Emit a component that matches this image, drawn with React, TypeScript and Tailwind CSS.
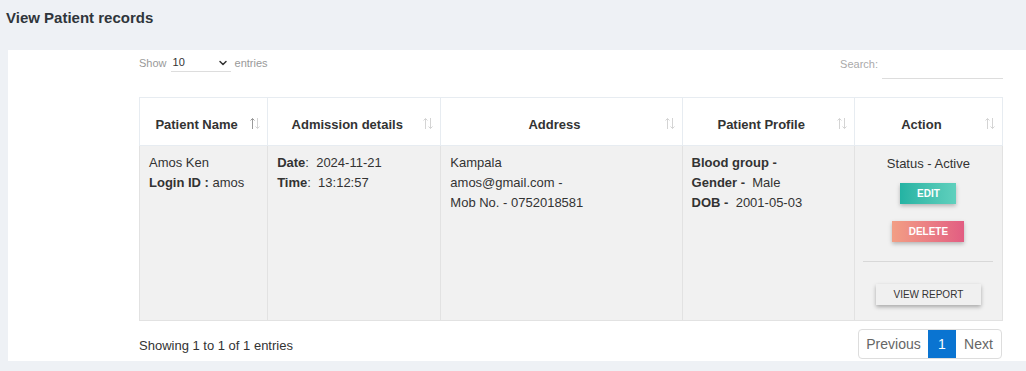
import { ChevronDown } from "lucide-react";

const SortIcon = ({ active = false }: { active?: boolean }) => (
  <svg
    width="12"
    height="13"
    viewBox="0 0 12 13"
    fill="none"
    strokeWidth="1"
    className="absolute right-[6px] top-[19px]"
  >
    <g stroke={active ? "#9a9a9a" : "#d4d4d4"}>
      <path d="M3.5 1.5V12" />
      <path d="M1.5 3.5L3.5 1.5L5.5 3.5" />
    </g>
    <g stroke="#d4d4d4">
      <path d="M8.5 1V11.5" />
      <path d="M6.5 9.5L8.5 11.5L10.5 9.5" />
    </g>
  </svg>
);

const headers = [
  { label: "Patient Name", width: "w-[128px]", active: true },
  { label: "Admission details", width: "w-[173px]" },
  { label: "Address", width: "w-[241px]" },
  { label: "Patient Profile", width: "w-[172px]" },
  { label: "Action", width: "w-[148px]" },
];

const App = () => {
  return (
    <div className="h-[371px] w-[1026px] overflow-hidden bg-[#eef1f5] font-['Liberation_Sans',Arial,sans-serif] text-[#333]">
      {/* Page title */}
      <h1 className="h-[50px] pl-[6px] pt-[7px] text-[15px] font-bold text-[#2f353b]">
        View Patient records
      </h1>

      {/* Panel */}
      <div className="ml-[8px] h-[311px] bg-white pl-[131px] pr-[23px]">
        {/* Top controls */}
        <div className="flex h-[47px] items-start justify-between pt-[4px]">
          <div className="flex items-center gap-[4px] text-[11px] text-[#999]">
            <span>Show</span>
            <div className="flex h-[18px] w-[60px] items-center justify-between border-b border-[#ddd] px-[2px] text-[#333]">
              <span>10</span>
              <ChevronDown size={12} strokeWidth={3} className="text-[#333]" />
            </div>
            <span>entries</span>
          </div>
          <div className="flex items-start gap-[4px] text-[11px] text-[#aaa]">
            <span className="pt-[2px]">Search:</span>
            <div className="h-[25px] w-[121px] border-b border-[#ddd]" />
          </div>
        </div>

        {/* Table */}
        <table className="w-[864px] table-fixed border-collapse border border-[#e7ecf1] text-[13px]">
          <thead>
            <tr className="h-[48px] bg-white">
              {headers.map((h) => (
                <th
                  key={h.label}
                  className={`relative ${h.width} border border-[#e7ecf1] pb-[11px] pl-[8px] pr-[22px] text-center align-bottom font-bold text-[#333]`}
                >
                  {h.label}
                  <SortIcon active={h.active} />
                </th>
              ))}
            </tr>
          </thead>
          <tbody>
            <tr className="h-[175px] bg-[#f1f1f1] align-top leading-[20px]">
              <td className="border border-[#e2e2e2] px-[9px] pt-[7px]">
                <div>Amos Ken</div>
                <div>
                  <span className="font-bold">Login ID :</span> amos
                </div>
              </td>
              <td className="border border-[#e2e2e2] px-[9px] pt-[7px]">
                <div>
                  <span className="font-bold">Date</span>:&nbsp; 2024-11-21
                </div>
                <div>
                  <span className="font-bold">Time</span>:&nbsp; 13:12:57
                </div>
              </td>
              <td className="border border-[#e2e2e2] px-[9px] pt-[7px]">
                <div>Kampala</div>
                <div>amos@gmail.com -</div>
                <div>Mob No. - 0752018581</div>
              </td>
              <td className="border border-[#e2e2e2] px-[9px] pt-[7px]">
                <div className="font-bold">Blood group -</div>
                <div>
                  <span className="font-bold">Gender -</span>&nbsp; Male
                </div>
                <div>
                  <span className="font-bold">DOB -</span>&nbsp; 2001-05-03
                </div>
              </td>
              <td className="border border-[#e2e2e2] px-[9px] pt-[8px]">
                <div className="flex flex-col items-center">
                  <div className="text-center leading-[20px]">Status - Active</div>
                  <button className="mt-[9px] h-[21px] w-[56px] bg-gradient-to-r from-[#23b3a3] to-[#5fd0bd] text-[10px] font-bold text-white shadow-[0_2px_4px_rgba(0,0,0,0.25)]">
                    EDIT
                  </button>
                  <button className="mt-[17px] h-[21px] w-[72px] bg-gradient-to-r from-[#f29e84] to-[#e25d82] text-[10px] font-bold text-white shadow-[0_2px_4px_rgba(0,0,0,0.25)]">
                    DELETE
                  </button>
                  <div className="mt-[19px] h-px w-[130px] bg-[#d8d8d8]" />
                  <button className="mt-[22px] h-[21px] w-[105px] bg-[#f0f0f0] text-[10px] text-[#333] shadow-[0_2px_4px_rgba(0,0,0,0.3)]">
                    VIEW REPORT
                  </button>
                </div>
              </td>
            </tr>
          </tbody>
        </table>

        {/* Footer */}
        <div className="mt-[8px] flex items-center justify-between">
          <div className="pt-[4px] text-[13px] text-[#333]">Showing 1 to 1 of 1 entries</div>
          <div className="mr-[1px] flex h-[30px] overflow-hidden rounded-[4px] border border-[#ddd] text-[14px] text-[#666]">
            <span className="flex w-[69px] items-center justify-center">Previous</span>
            <span className="flex w-[28px] items-center justify-center bg-[#0a74d1] text-white">1</span>
            <span className="flex w-[45px] items-center justify-center">Next</span>
          </div>
        </div>
      </div>
    </div>
  );
};

export default App;
